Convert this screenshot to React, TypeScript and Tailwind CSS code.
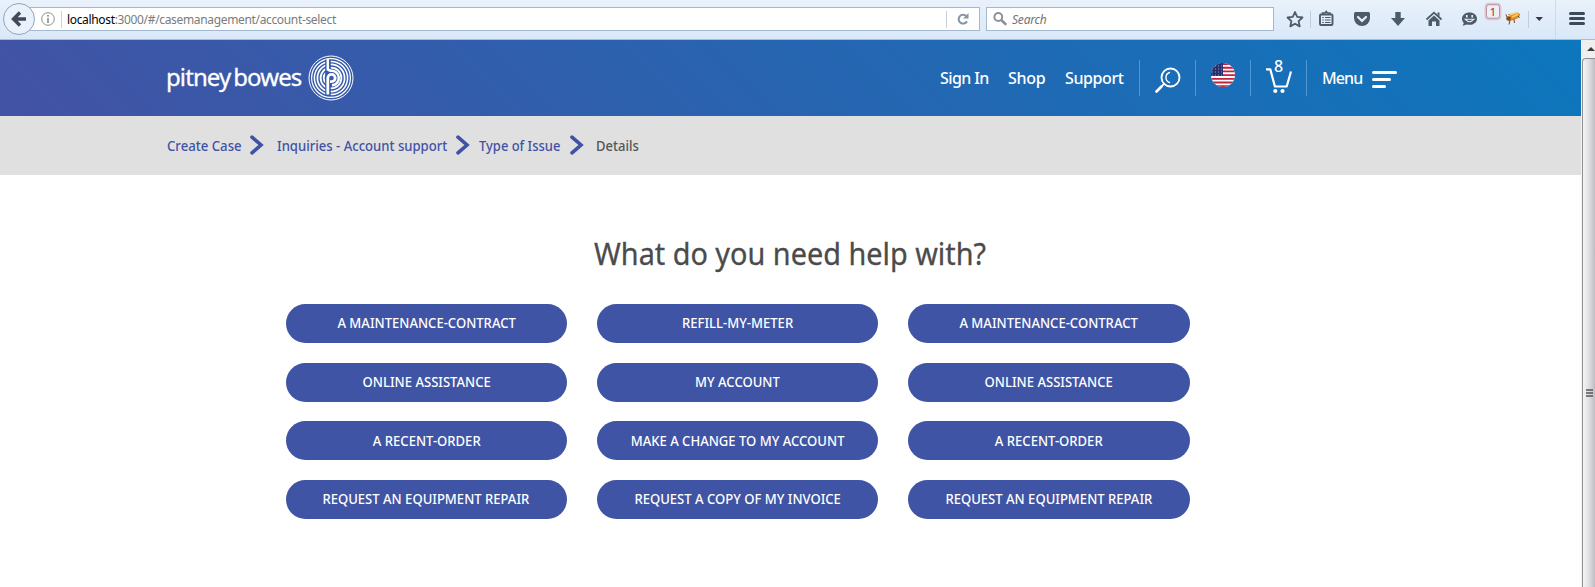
import React from "react";

const toolbarIcon = "shrink-0 text-[#4d5a69]";

function BrowserBar() {
  return (
    <div className="flex h-10 items-start border-b border-[#a9bfd6] bg-gradient-to-b from-[#e9f1fb] to-[#d9e8f8]">
      <svg className="h-[39px] w-9 shrink-0" viewBox="0 0 36 39">
        <path d="M30 7.5H36M30 30.5H36" stroke="#a3b9d0" />
        <path d="M30 8h6v22h-6z" fill="#fff" />
        <circle cx="19" cy="19" r="15.5" fill="#e9f2fc" stroke="#8fa5be" />
        <path d="M20 12.5 13.5 19l6.5 6.500M14 19h12" fill="none" stroke="#414b57" strokeWidth="3.400" />
      </svg>
      <div className="mt-[7px] flex h-6 w-[944px] shrink-0 items-center border-y border-r border-[#a3b9d0] bg-white pl-[5px]">
        <svg className="h-[14px] w-[14px] shrink-0" viewBox="0 0 14 14">
          <circle cx="7" cy="7" r="6.300" fill="none" stroke="#8c8c8c" />
          <path d="M7 3v1.800M7 6v5" stroke="#8c8c8c" strokeWidth="1.600" />
        </svg>
        <div className="ml-[6px] h-[17px] w-px shrink-0 bg-[#d2d2d2]" />
        <div className="ml-[5px] w-[879px] whitespace-nowrap pt-[2px] text-[12px] leading-[20px] tracking-[-0.34px] text-[#7b7b7b]">
          <span className="text-black">localhost</span>:3000/#/casemanagement/account-select
        </div>
        <div className="h-[17px] w-px shrink-0 bg-[#c6cfda]" />
        <svg className="ml-[10px] h-3 w-3 shrink-0" viewBox="0 0 12 12">
          <path d="M9.300 3.200A4.400 4.400 0 1 0 10 8.200" fill="none" stroke="#8494a6" strokeWidth="2" />
          <path d="M11.500 0v5.500H6z" fill="#8494a6" />
        </svg>
      </div>
      <div className="ml-[6px] mt-[7px] flex h-6 w-[288px] shrink-0 items-center border border-[#a3b9d0] bg-white pl-[6px]">
        <svg className="h-[14px] w-[14px] shrink-0" viewBox="0 0 14 14">
          <circle cx="5.300" cy="5" r="3.900" fill="none" stroke="#8b929a" strokeWidth="2" />
          <path d="m8.300 8 5 4.800" stroke="#8b929a" strokeWidth="2.600" />
        </svg>
        <span className="ml-[5px] pt-[2px] text-[12px] italic leading-[20px] tracking-[-0.2px] text-[#727272]">Search</span>
      </div>
      <svg className={`${toolbarIcon} h-[39px] w-[321px]`} viewBox="1274 0 321 39" fill="none" stroke="currentColor">
        <path d="m1295 12 2.200 4.900 5.300.6-3.900 3.600 1.100 5.300-4.700-2.700-4.700 2.700 1.100-5.300-3.900-3.600 5.300-.6z" strokeWidth="1.800" strokeLinejoin="round" />
        <path d="M1310.500 11v17M1528.500 11v17" stroke="#c0cddc" />
        <path d="M1555.500 0v39" stroke="#ccdae9" />
        <rect x="1320" y="14.500" width="12.500" height="10.500" rx="1" strokeWidth="1.900" />
        <path d="M1322.500 14v-1h2.500l1.200-1.500 1.200 1.500h2.500v1" strokeWidth="1.600" />
        <path d="M1322.300 17.500h1.500M1325 17.500h5.500M1322.300 20h1.500M1325 20h5.500M1322.300 22.500h1.500M1325 22.500h5.500" strokeWidth="1.200" />
        <path d="M1355.500 12h13q1.500 0 1.500 1.500v4.500a8 8 0 0 1-16 0v-4.500q0-1.500 1.500-1.500z" fill="currentColor" stroke="none" />
        <path d="m1358 17 4 3.900 4-3.900" stroke="#e5effa" strokeWidth="2.200" strokeLinecap="round" />
        <path d="M1395.300 12h5.400v6h4.300l-7 8-7-8h4.300z" fill="currentColor" stroke="none" />
        <path d="m1426.500 19.500 7.500-6.800 7.500 6.800" strokeWidth="1.800" />
        <path d="m1434 15.500 5.500 5v5.500h-3.500v-4.500h-4v4.500h-3.500v-5.500zM1437.500 12.500h2v4l-2-1.800z" fill="currentColor" stroke="none" />
        <path d="M1469.500 12.500c4.300 0 7.500 2.700 7.500 6.200s-3.200 6.100-7.500 6.100c-1 0-1.900-.1-2.700-.4l-4.300 1.300 1.400-2.700c-1.200-1.100-1.900-2.600-1.900-4.300 0-3.500 3.200-6.200 7.500-6.200z" fill="currentColor" stroke="none" />
        <path d="M1465 19.200q4.500 5 9 0z" stroke="#e5effa" strokeWidth="1.100" />
        <path d="M1466.800 15v2.500M1472.200 15v2.500" stroke="#e5effa" strokeWidth="1.700" />
        <rect x="1485.700" y="4" width="14.500" height="15" rx="3" stroke="#dcc6d0" strokeWidth="2.400" />
        <rect x="1486.500" y="4.700" width="13" height="13.500" rx="2.500" fill="#f1edf5" stroke="#b793a3" />
        <text x="1493" y="15.500" textAnchor="middle" fontSize="11" fill="#98234b" stroke="none">1</text>
        <ellipse cx="1514.500" cy="17" rx="6.500" ry="3" fill="#e38b22" stroke="none" transform="rotate(-25 1514 18)" />
        <circle cx="1508.500" cy="18.500" r="2.300" fill="#8a4b13" stroke="none" />
        <path d="m1510 14.500 8-2M1512 17l6-2.500" stroke="#f7cf62" strokeWidth="1.400" />
        <path d="m1510 20-1 4.500M1514 19.500l.5 3.500M1518 16l1.500 2M1507 17l-1-2.500M1510 15.500l-1.500-1.500" stroke="#53381b" strokeWidth=".9" />
        <path d="M1535.500 17h7.500l-3.700 4z" fill="#333c47" stroke="none" />
        <path d="M1570.500 13.500h13M1570.500 18.500h13M1570.500 23.500h13" stroke="#3f4a57" strokeWidth="3" strokeLinecap="round" />
      </svg>
    </div>
  );
}

function Emblem() {
  return (
    <svg className="ml-[5.5px] h-[46px] w-[46px] shrink-0" viewBox="-23 -23 46 46" fill="none" stroke="#fff">
      <circle r="22" strokeWidth="1" />
      <circle r="19.400" strokeWidth="1.200" />
      <circle r="16.600" strokeWidth="1.500" />
      <circle r="13.600" strokeWidth="1.700" />
      <circle r="10.400" strokeWidth="1.800" />
      <path d="M-5-5.300A7.200 7.200 0 0 0-5 5.300" strokeWidth="1.800" />
      <path d="M-3-18.500V-2M-3-4V18" stroke="#3459a9" strokeWidth="5.600" />
      <path d="M-3.200-19V-8.500Q-2-7.500 0-7.300A7.300 7.300 0 0 1 1 7.300" strokeWidth="2.500" />
      <path d="M-3.200 16.500V0A3.700 3.700 0 1 1 .5 3.700H-1" strokeWidth="2.800" />
    </svg>
  );
}

function Flag() {
  return (
    <svg className="mb-[6px] h-6 w-6" viewBox="0 0 24 24">
      <defs>
        <clipPath id="flag-round"><circle cx="12" cy="12" r="12" /></clipPath>
      </defs>
      <g clipPath="url(#flag-round)">
        <path d="M0 0h24v24H0z" fill="#fff" />
        <path d="M0 1h24M0 4.700h24M0 8.400h24M0 12.100h24M0 15.800h24M0 19.500h24M0 23.200h24" stroke="#c4203f" strokeWidth="1.850" />
        <path d="M0 0h12v13H0z" fill="#29306e" />
        <path d="M1 3h11M1 6h11M1 9h11M1 12h11" stroke="#8d93c0" strokeWidth="1" strokeDasharray="1 2" />
      </g>
    </svg>
  );
}

function Header() {
  return (
    <header className="flex h-[76px] items-center bg-[linear-gradient(45deg,#4352a4_0%,#0c77bd_100%)] pl-[166px] text-white">
      <div className="flex w-[774px] items-center">
        <span className="w-[136px] whitespace-nowrap pb-[2px] text-[24px] leading-8 tracking-[-0.9px] [word-spacing:-2.5px] [-webkit-text-stroke:0.3px_#fff]">
          pitney bowes
        </span>
        <Emblem />
      </div>
      <nav className="flex w-[199px] items-center whitespace-nowrap text-[16px] font-medium tracking-[-0.6px]">
        <span className="w-[68px]">Sign In</span>
        <span className="w-[57px] tracking-[-0.3px]">Shop</span>
        <span className="tracking-[-0.4px]">Support</span>
      </nav>
      <div className="flex h-9 w-14 items-center justify-center border-l border-[#4f97d3]">
        <svg className="mt-1 h-[27px] w-[27px]" viewBox="0 0 27 27" fill="none" stroke="#fff" strokeLinecap="round">
          <circle cx="16.500" cy="10.500" r="9" strokeWidth="1.900" />
          <path d="M15.500 5.500a5.300 5.300 0 0 0 0 10" strokeWidth="1.400" />
          <path d="m9.800 17.200-1.500 1.500" strokeWidth="1.800" />
          <path d="m7.500 19.500-5 5" strokeWidth="2.700" />
        </svg>
      </div>
      <div className="flex h-9 w-[55px] items-center justify-center border-l border-[#4f97d3]"><Flag /></div>
      <div className="relative flex h-9 w-14 items-center border-l border-[#4f97d3] pl-[13.5px]">
        <svg className="mt-[5px] h-[27px] w-7" viewBox="0 0 28 27" fill="none" stroke="#fff" strokeWidth="2.200">
          <path d="M1 2.300h4.300l4.600 17.200h11.800L26 4.500" strokeLinejoin="round" />
          <circle cx="10.300" cy="24" r="2.100" fill="#fff" stroke="none" />
          <circle cx="17.500" cy="24" r="2.100" fill="#fff" stroke="none" />
        </svg>
        <span className="absolute left-[23px] top-[-3px] text-[16px] font-medium leading-[18px]">8</span>
      </div>
      <div className="flex h-9 items-center border-l border-[#4f97d3] pl-[15px]">
        <span className="w-[50px] text-[16px] font-medium tracking-[-0.9px]">Menu</span>
        <div className="mt-[2px] flex flex-col gap-1">
          <div className="h-[3px] w-[25px] rounded-full bg-white" />
          <div className="h-[3px] w-[19px] rounded-full bg-white" />
          <div className="h-[3px] w-[14px] rounded-full bg-white" />
        </div>
      </div>
    </header>
  );
}

function Chevron() {
  return (
    <svg className="h-5 w-[14px] shrink-0" viewBox="0 0 14 20">
      <path d="m2 2.200 9 7.800-9 7.800" fill="none" stroke="#4052a4" strokeWidth="3.600" strokeLinecap="round" />
    </svg>
  );
}

function Breadcrumb() {
  return (
    <div className="flex h-[59px] items-center whitespace-nowrap bg-[#e0e0e0] pb-[2px] pl-[167px] text-[14px] font-medium leading-[18px] text-[#4052a4]">
      <span className="w-[83px] pt-[2px]"><span className="inline-block origin-left scale-x-[0.94]">Create Case</span></span>
      <Chevron />
      <span className="ml-[13px] w-[178.500px] pt-[2px]"><span className="inline-block origin-left scale-x-[0.935]">Inquiries - Account support</span></span>
      <Chevron />
      <span className="ml-[9.500px] w-[91px] pt-[2px]"><span className="inline-block origin-left scale-x-[0.925]">Type of Issue</span></span>
      <Chevron />
      <span className="ml-[12px] pt-[2px] text-[#555]"><span className="inline-block origin-left scale-x-[0.93]">Details</span></span>
    </div>
  );
}

const topics = [
  "A MAINTENANCE-CONTRACT",
  "REFILL-MY-METER",
  "A MAINTENANCE-CONTRACT",
  "ONLINE ASSISTANCE",
  "MY ACCOUNT",
  "ONLINE ASSISTANCE",
  "A RECENT-ORDER",
  "MAKE A CHANGE TO MY ACCOUNT",
  "A RECENT-ORDER",
  "REQUEST AN EQUIPMENT REPAIR",
  "REQUEST A COPY OF MY INVOICE",
  "REQUEST AN EQUIPMENT REPAIR",
];

function Scrollbar() {
  return (
    <div className="flex w-[14px] shrink-0 flex-col border-l border-[#f4f4f4] bg-[#efefef]">
      <div className="flex h-[18px] items-center justify-center pl-[5px]">
        <svg className="h-1 w-2" viewBox="0 0 8 4"><path d="M0 4 4 0l4 4z" fill="#3c3c3c" /></svg>
      </div>
      <div className="flex flex-1 items-start rounded-tl-sm border-l border-t border-[#8e8e93] bg-gradient-to-r from-[#f5f5f5] via-[#dfdfe2] to-[#bcbcc4] pl-[3px]">
        <svg className="mt-[330px] h-2 w-[7px]" viewBox="0 0 7 8"><path d="M0 1h7M0 4h7M0 7h7" stroke="#555" strokeWidth="1.300" /></svg>
      </div>
    </div>
  );
}

export default function App() {
  return (
    <div className="flex h-[587px] w-[1595px] flex-col overflow-hidden bg-white font-['Noto_Sans','Open_Sans',sans-serif]">
      <BrowserBar />
      <div className="flex min-h-0 flex-1">
        <div className="w-[1581px] shrink-0">
          <Header />
          <Breadcrumb />
          <main>
            <h1 className="ml-[594px] mt-[57px] w-max origin-left scale-x-[0.93] whitespace-nowrap text-[31px] leading-[42px] text-[#4b4b4b] [-webkit-text-stroke:0.3px_#4b4b4b]">
              What do you need help with?
            </h1>
            <div className="ml-[285.7px] mt-[30px] grid w-[904px] grid-cols-3 gap-x-[30px] gap-y-[19.7px]">
              {topics.map((topic, i) => (
                <button
                  key={i}
                  className="flex h-[39px] items-center justify-center whitespace-nowrap rounded-full bg-[#3f54a4] pb-[0.5px] text-[14px] font-medium leading-5 text-white"
                >
                  <span className="scale-x-[0.933]">{topic}</span>
                </button>
              ))}
            </div>
          </main>
        </div>
        <Scrollbar />
      </div>
    </div>
  );
}
